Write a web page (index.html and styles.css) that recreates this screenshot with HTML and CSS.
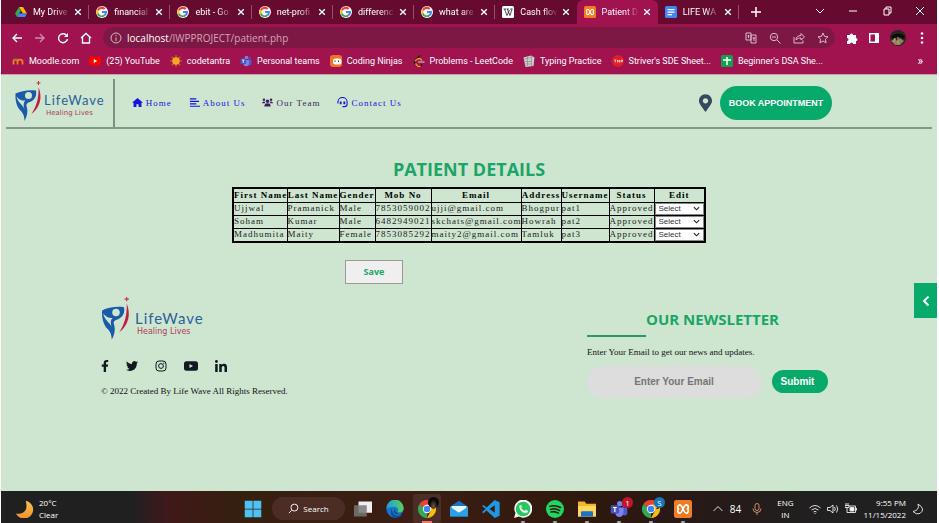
FILE: index.html
```html
<!DOCTYPE html>
<html lang="en">
<head>
<meta charset="utf-8">
<title>Patient Details</title>
<link rel="stylesheet" href="styles.css">
</head>
<body>
<svg class="defs" aria-hidden="true">
  <symbol id="google" viewBox="0 0 48 48">
    <circle cx="24" cy="24" r="24" fill="#fff"/>
    <path fill="#fbbc05" d="M10.3 18.7l-6-4.6a20 20 0 0 0 0 19.8l6-5a14 14 0 0 1 0-10.200z"/>
    <path fill="#ea4335" d="M24 12c3.100 0 5.800 1.200 8 3l5.600-5.600A20 20 0 0 0 4.300 14.100l6.500 4.700A14 14 0 0 1 24 12z"/>
    <path fill="#34a853" d="M24 44c5.200 0 9.900-2 13.400-5.200l-6.200-5.200A12 12 0 0 1 10.700 28.100l-6.400 5.800A20 20 0 0 0 24 44z"/>
    <path fill="#4285f4" d="M43.600 20H24v8h11.300a12 12 0 0 1-4.100 5.600l6.200 5.200C37 39.200 44 34 44 24c0-1.300-.1-2.700-.4-4z"/>
  </symbol>
  <symbol id="xampp" viewBox="0 0 24 24">
    <rect width="24" height="24" rx="3" fill="#f37c22"/>
    <path d="M8 6.500a3 3 0 0 0-3 3c0 1.400 1 2.500 2 2.500-1 0-2 1.100-2 2.500a3 3 0 0 0 3 3c3 0 5-11 8-11a3 3 0 0 1 3 3c0 1.400-1 2.500-2 2.500 1 0 2 1.100 2 2.500a3 3 0 0 1-3 3c-3 0-5-11-8-11z" fill="none" stroke="#fff" stroke-width="2.200"/>
  </symbol>
  <symbol id="teams" viewBox="0 0 24 24">
    <circle cx="19" cy="7" r="2.500" fill="#5059c9"/><circle cx="13" cy="5" r="3.600" fill="#7b83eb"/>
    <path d="M16 10h7v6a3.500 3.500 0 0 1-7 2z" fill="#5059c9"/>
    <path d="M8 10h10v7a5.500 5.500 0 0 1-11 0z" fill="#7b83eb"/>
    <rect x="1" y="7" width="11" height="11" rx="1.500" fill="#4b53bc"/>
    <path d="M4 10h5M6.500 10v6" stroke="#fff" stroke-width="1.600"/>
  </symbol>
  <symbol id="chrome" viewBox="0 0 24 24">
    <path d="M12 12L1.600 6A12 12 0 0 1 22.400 6z" fill="#ea4335"/>
    <path d="M12 12L1.600 6A12 12 0 0 0 12 24z" fill="#34a853"/>
    <path d="M12 12h10V6h.4A12 12 0 0 1 12 24l5-9z" fill="#fbbc05"/>
    <path d="M12 6h10.400L17 15z" fill="#fbbc05"/>
    <circle cx="12" cy="12" r="5.600" fill="#fff"/><circle cx="12" cy="12" r="4.400" fill="#4285f4"/>
  </symbol>
  <symbol id="emblem" viewBox="0 0 54 84">
    <path fill="#1a5aa8" d="M1 25C12 20 26 17 42 19c2 12-3 20-15 24-5 2-5 6-3 10 2 9 0 18-5 27 0-9-2-14-7-20C5 54 0 42 1 25z"/>
    <circle cx="27" cy="29" r="7" fill="#cee6d0"/>
    <path fill="#cee6d0" d="M3 31c6 7 12 9 18 8-5 4-4 10-2 17C14 46 6 44 3 31z"/>
    <path fill="#c01f45" d="M47 12c8 20 4 40-14 54 10-16 15-32 14-54z"/>
    <path fill="none" stroke="#d3283f" stroke-width="2" d="M47 0v8M43 4h8"/>
  </symbol>
  <symbol id="x" viewBox="0 0 10 10"><path d="M1.500 1.500l7 7M8.500 1.500l-7 7" stroke="currentColor" stroke-width="1.700"/></symbol>
</svg>

<header class="browser">
  <div class="tabstrip">
    <div class="tabs">
      <div class="tab"><svg class="ico" viewBox="0 0 24 24"><path d="M8 2h8l8 13h-8z" fill="#fbbc05"/><path d="M8 2L0 15l4 7 8-13z" fill="#34a853"/><path d="M8 15h16l-4 7H4z" fill="#4285f4"/></svg><span>My Drive</span><svg class="close"><use href="#x"/></svg></div>
      <div class="tab"><svg class="ico"><use href="#google"/></svg><span>financial</span><svg class="close"><use href="#x"/></svg></div>
      <div class="tab"><svg class="ico"><use href="#google"/></svg><span>ebit - Go</span><svg class="close"><use href="#x"/></svg></div>
      <div class="tab"><svg class="ico"><use href="#google"/></svg><span>net-profi</span><svg class="close"><use href="#x"/></svg></div>
      <div class="tab"><svg class="ico"><use href="#google"/></svg><span>differenc</span><svg class="close"><use href="#x"/></svg></div>
      <div class="tab"><svg class="ico"><use href="#google"/></svg><span>what are</span><svg class="close"><use href="#x"/></svg></div>
      <div class="tab before"><svg class="ico" viewBox="0 0 24 24"><rect width="24" height="24" rx="3" fill="#fff"/><path d="M3 6h5M9 6h5M16 6h5M5 6l5 13 5-11M10.500 6l5.500 13L20 6" fill="none" stroke="#222" stroke-width="1.600"/></svg><span>Cash flov</span><svg class="close"><use href="#x"/></svg></div>
      <div class="tab active"><svg class="ico"><use href="#xampp"/></svg><span>Patient D</span><svg class="close"><use href="#x"/></svg></div>
      <div class="tab"><svg class="ico" viewBox="0 0 24 24"><rect width="24" height="24" rx="3" fill="#4285f4"/><path d="M5 7h14M5 12h14M5 17h9" stroke="#fff" stroke-width="2.500"/></svg><span>LIFE WA</span><svg class="close"><use href="#x"/></svg></div>
    </div>
    <div class="window">
      <button aria-label="New tab"><svg viewBox="0 0 10 10"><path d="M5 0v10M0 5h10" stroke-width="1.500"/></svg></button>
      <button aria-label="Search tabs"><svg viewBox="0 0 10 10"><path d="M1 3l4 4 4-4"/></svg></button>
      <button aria-label="Minimize"><svg viewBox="0 0 10 10"><path d="M1 5h8"/></svg></button>
      <button aria-label="Restore"><svg viewBox="0 0 10 10"><path d="M2 3h5v6H2zM4 3V1h5v6H7"/></svg></button>
      <button aria-label="Close"><svg viewBox="0 0 10 10"><path d="M1 1l8 8M9 1L1 9"/></svg></button>
    </div>
  </div>
  <div class="toolbar">
    <div class="navs">
      <button aria-label="Back"><svg viewBox="0 0 12 12"><path d="M11 6H2M6 2L2 6l4 4"/></svg></button>
      <button class="dim" aria-label="Forward"><svg viewBox="0 0 12 12"><path d="M1 6h9M6 2l4 4-4 4"/></svg></button>
      <button aria-label="Reload"><svg viewBox="0 0 12 12"><path d="M10 4A4.500 4.500 0 1 0 10.500 7"/><path d="M11 1v4H7z" fill="#fff" stroke="none"/></svg></button>
      <button aria-label="Home"><svg viewBox="0 0 12 12"><path d="M1 6l5-4.500L11 6M2.500 5v6h7V5"/></svg></button>
    </div>
    <div class="address">
      <svg viewBox="0 0 12 12"><circle cx="6" cy="6" r="5"/><path d="M6 5.500V9M6 3v1.200"/></svg>
      <span class="url"><b>localhost</b>/IWPPROJECT/patient.php</span>
      <svg viewBox="0 0 12 12"><path d="M1 1h5v7H1zM6 3h5v8H6zM2.500 4h2M3.500 3v3M7.500 6h2.500M9 5v4"/></svg>
      <svg viewBox="0 0 12 12"><circle cx="5" cy="5" r="3.700"/><path d="M3 5h4M8 8l3.500 3.500"/></svg>
      <svg viewBox="0 0 12 12"><path d="M1 5v6h9V8.500M3 8c0-3 2-4.500 5-4.500V1.500L11.500 5 8 8V6C6 6 4.500 6.300 3 8z"/></svg>
      <svg viewBox="0 0 12 12"><path d="M6 1l1.500 3.400 3.500.4-2.600 2.400.7 3.600L6 9l-3.100 1.800.7-3.600L1 4.800l3.500-.4z"/></svg>
    </div>
    <div class="tools">
      <svg viewBox="0 0 12 12"><path d="M1 3h3a1.500 1.500 0 1 1 3 0h3v3a1.500 1.500 0 1 1 0 3v3H7a1.500 1.500 0 0 0-3 0H1V9a1.500 1.500 0 0 0 0-3z" fill="#fff"/></svg>
      <svg viewBox="0 0 12 12"><path d="M1 1h10v10H1z" fill="#fff"/><path d="M2.500 2.500H7v7H2.500z" fill="#a1134f"/></svg>
      <svg class="avatar" viewBox="0 0 16 16"><circle cx="8" cy="8" r="8" fill="#2a2620"/><path d="M1 6q7-5 14 0l-2 3q-5-4-10 0z" fill="#0c0c0c"/><path d="M1 11l4-3 2 3 3-3 4 3-4 4H5z" fill="#8e8060"/><path d="M8 7v7M5 8l-1 4" stroke="#d4a878"/></svg>
      <svg viewBox="0 0 12 12"><circle cx="6" cy="1.500" r="1.300" fill="#fff"/><circle cx="6" cy="6" r="1.300" fill="#fff"/><circle cx="6" cy="10.500" r="1.300" fill="#fff"/></svg>
    </div>
  </div>
  <nav class="bookmarks">
    <a href="#"><svg viewBox="0 0 24 24"><path d="M3 19v-6q0-4 4-4t4 4v6M11 19v-6q0-4 5-4t5 4v6" fill="none" stroke="#f98012" stroke-width="3.500"/><path d="M0 8l8-3 6 2-5 2z" fill="#555"/></svg>Moodle.com</a>
    <a href="#"><svg viewBox="0 0 24 24"><rect y="3" width="24" height="18" rx="5" fill="#f00"/><path d="M9.500 8l7 4-7 4z" fill="#fff"/></svg>(25) YouTube</a>
    <a href="#"><svg viewBox="0 0 24 24"><path d="M12 0v24M0 12h24M3.500 3.500l17 17M20.500 3.500l-17 17" stroke="#c8591c" stroke-width="3"/><circle cx="12" cy="12" r="7.500" fill="#f4a52a"/></svg>codetantra</a>
    <a href="#"><svg><use href="#teams"/></svg>Personal teams</a>
    <a href="#"><svg viewBox="0 0 24 24"><rect width="24" height="24" rx="6" fill="#f27427"/><rect x="6" y="7" width="17" height="12" rx="5" fill="#fff"/><path d="M10 11v3M17 11v3" stroke="#a1134f" stroke-width="2"/></svg>Coding Ninjas</a>
    <a href="#"><svg viewBox="0 0 24 24" fill="none" stroke-width="2.600"><path d="M14 1L4 12q-2 3 0 5l5 5q3 2 6 0l3-3" stroke="#1b1b1b"/><path d="M4 12l5-4q3-2 6 0l3 3M5 17l4 5q3 2 6 0" stroke="#f89f1b"/><path d="M10 14h13" stroke="#b3b3b3"/></svg>Problems - LeetCode</a>
    <a href="#"><svg viewBox="0 0 24 24"><path d="M1 5l15-4 7 4-2 17-16 2z" fill="#ccc"/><path d="M3 8l13-3M4 13h13M5 18h12M17 2v20M9 4v18" stroke="#777"/></svg>Typing Practice</a>
    <a href="#"><svg viewBox="0 0 24 24"><circle cx="12" cy="12" r="12" fill="#e11d25"/><path d="M4 10h5M6.500 10v5M11 15v-5l2 3 2-3v5M18 15v-5h3v3h-3" fill="none" stroke="#fff" stroke-width="1.300"/></svg>Striver's SDE Sheet...</a>
    <a href="#"><svg viewBox="0 0 24 24"><rect width="24" height="24" rx="3" fill="#12a150"/><path d="M12 4v16M4 10h16" stroke="#fff" stroke-width="3"/></svg>Beginner's DSA She...</a>
    <span class="more">»</span>
  </nav>
</header>

<div class="page">
  <header class="site">
    <a class="brand" href="#"><svg><use href="#emblem"/></svg><span><b>LifeWave</b><small>Healing Lives</small></span></a>
    <nav class="menu">
      <a href="#"><svg viewBox="0 0 12 12" fill="currentColor"><path d="M6 1l6 5.300H10.300V11H7.200V8H4.800v3H1.700V6.300H0z"/></svg>Home</a>
      <a href="#"><svg viewBox="0 0 12 12" stroke="currentColor" stroke-width="1.300"><path d="M1 2h7M1 4.700h10M1 7.400h7M1 10.100h11"/></svg>About Us</a>
      <a class="visited" href="#"><svg viewBox="0 0 14 12" fill="currentColor"><circle cx="2.500" cy="2.500" r="1.600"/><circle cx="11.500" cy="2.500" r="1.600"/><circle cx="7" cy="4.500" r="2.200"/><path d="M0 7q0-2.500 3-2.300L4.500 7zM14 7q0-2.500-3-2.300L9.500 7zM3 11q0-4 4-4t4 4z"/></svg>Our Team</a>
      <a href="#"><svg viewBox="0 0 12 12" fill="none" stroke="currentColor" stroke-width="1.200"><path d="M1 7V5.500a5 5 0 0 1 10 0V8q0 2.500-3 2.500H6"/><path d="M4 5v3M8 5v3" stroke-width="2"/></svg>Contact Us</a>
    </nav>
    <svg class="pin" viewBox="0 0 384 512"><path fill="#34495e" d="M172.268 501.670C26.970 291.031 0 269.413 0 192 0 85.961 85.961 0 192 0s192 85.961 192 192c0 77.413-26.970 99.031-172.268 309.670-9.535 13.774-29.930 13.773-39.464 0zM192 272c44.183 0 80-35.817 80-80s-35.817-80-80-80-80 35.817-80 80 35.817 80 80 80z"/></svg>
    <button class="book">BOOK APPOINTMENT</button>
  </header>

  <main>
    <h1>PATIENT DETAILS</h1>
    <form class="records">
      <table>
        <colgroup><col class="w54"><col class="w52"><col class="w36"><col class="w56"><col class="w90"><col class="w40"><col class="w48"><col class="w45"><col class="w51"></colgroup>
        <thead><tr><th>First Name</th><th>Last Name</th><th>Gender</th><th>Mob No</th><th>Email</th><th>Address</th><th>Username</th><th>Status</th><th>Edit</th></tr></thead>
        <tbody>
          <tr><td>Ujjwal</td><td>Pramanick</td><td>Male</td><td>7853059002</td><td>ujji@gmail.com</td><td>Bhogpur</td><td>pat1</td><td>Approved</td><td><select aria-label="Edit pat1"><option>Select</option></select></td></tr>
          <tr><td>Soham</td><td>Kumar</td><td>Male</td><td>6482949021</td><td>skchats@gmail.com</td><td>Howrah</td><td>pat2</td><td>Approved</td><td><select aria-label="Edit pat2"><option>Select</option></select></td></tr>
          <tr><td>Madhumita</td><td>Maity</td><td>Female</td><td>7853085292</td><td>maity2@gmail.com</td><td>Tamluk</td><td>pat3</td><td>Approved</td><td><select aria-label="Edit pat3"><option>Select</option></select></td></tr>
        </tbody>
      </table>
      <button class="save" type="button">Save</button>
    </form>
  </main>

  <footer class="foot">
    <div class="about">
      <a class="brand" href="#"><svg><use href="#emblem"/></svg><span><b>LifeWave</b><small>Healing Lives</small></span></a>
      <div class="social">
        <a href="#" aria-label="Facebook"><svg class="slim" viewBox="0 0 320 512"><path d="M279.140 288l14.220-92.660h-88.910v-60.130c0-25.350 12.420-50.060 52.240-50.060h40.420V6.260S260.430 0 225.360 0c-73.220 0-121.080 44.380-121.080 124.720v70.620H22.890V288h81.390v224h100.170V288z"/></svg></a>
        <a href="#" aria-label="Twitter"><svg viewBox="0 0 24 24"><path d="M23.953 4.570a10 10 0 01-2.825.775 4.958 4.958 0 002.163-2.723c-.951.555-2.005.959-3.127 1.184a4.920 4.920 0 00-8.384 4.482C7.690 8.095 4.067 6.130 1.640 3.162a4.822 4.822 0 00-.666 2.475c0 1.710.870 3.213 2.188 4.096a4.904 4.904 0 01-2.228-.616v.060a4.923 4.923 0 003.946 4.827 4.996 4.996 0 01-2.212.085 4.936 4.936 0 004.604 3.417 9.867 9.867 0 01-6.102 2.105c-.390 0-.779-.023-1.170-.067a13.995 13.995 0 007.557 2.209c9.053 0 13.998-7.496 13.998-13.985 0-.210 0-.420-.015-.630A9.935 9.935 0 0024 4.590z"/></svg></a>
        <a href="#" aria-label="Instagram"><svg class="line" viewBox="0 0 24 24"><rect x="2" y="2" width="20" height="20" rx="6"/><circle cx="12" cy="12" r="4.800"/><circle cx="17.800" cy="6.200" r=".5"/></svg></a>
        <a href="#" aria-label="YouTube"><svg class="wide" viewBox="0 0 28 24"><path fill-rule="evenodd" d="M5 2.500h18q5 0 5 5v9q0 5-5 5H5q-5 0-5-5v-9q0-5 5-5zM11 8v8l7-4z"/></svg></a>
        <a href="#" aria-label="LinkedIn"><svg viewBox="0 0 448 448"><path d="M100.280 448H7.400V148.900h92.880zM53.790 108.100C24.090 108.100 0 83.500 0 53.800a53.790 53.790 0 0 1 107.580 0c0 29.700-24.100 54.300-53.790 54.300zM447.900 448h-92.680V302.400c0-34.700-.7-79.200-48.290-79.200-48.290 0-55.690 37.700-55.690 76.700V448h-92.780V148.900h89.080v40.800h1.300c12.400-23.500 42.690-48.300 87.880-48.300 94 0 111.280 61.900 111.280 142.300V448z"/></svg></a>
      </div>
      <p>© 2022 Created By Life Wave All Rights Reserved.</p>
    </div>
    <form class="news">
      <h2>OUR NEWSLETTER</h2>
      <label for="mail">Enter Your Email to get our news and updates.</label>
      <div class="row"><input id="mail" type="email" placeholder="Enter Your Email"><button type="button">Submit</button></div>
    </form>
  </footer>
  <button class="drawer" aria-label="Open panel"><svg viewBox="0 0 10 12"><path d="M7.500 1.500L3 6l4.500 4.500" fill="none" stroke="#fff" stroke-width="2"/></svg></button>
</div>

<footer class="taskbar">
  <div class="weather"><svg viewBox="0 0 24 24"><defs><linearGradient id="moon" x2="0" y2="1"><stop stop-color="#ffc34d"/><stop offset="1" stop-color="#f0902a"/></linearGradient></defs><path d="M13 1a12 12 0 1 1-13 17q9 2 13-5 2-5 0-12z" fill="url(#moon)"/></svg><span>20°C<br>Clear</span></div>
  <div class="apps">
    <a href="#" aria-label="Start"><svg viewBox="0 0 24 24"><path fill="#4cc2f5" d="M1 1h10.500v10.500H1zM12.500 1H23v10.500H12.500zM1 12.500h10.500V23H1zM12.500 12.500H23V23H12.500z"/></svg></a>
    <button class="find"><svg viewBox="0 0 12 12"><circle cx="7" cy="5" r="3.800"/><path d="M4 8l-3 3"/></svg>Search</button>
    <a href="#" aria-label="Task view"><svg viewBox="0 0 24 24"><rect x="6" y="2" width="18" height="15" fill="#eee"/><rect y="7" width="17" height="15" fill="#777" opacity=".85"/></svg></a>
    <a href="#" aria-label="Edge"><svg viewBox="0 0 24 24"><defs><linearGradient id="edge"><stop stop-color="#1b9de2"/><stop offset="1" stop-color="#5bd15b"/></linearGradient></defs><circle cx="12" cy="12" r="11.500" fill="#1279c9"/><path d="M.5 11A11.500 11.500 0 0 1 23.500 11c0 5-5 6-8 5 2-5-1-7-4-7-5 0-8 1-11 2z" fill="url(#edge)"/><path d="M8 11c-1 5 3 10 8 10l5-1q-3 3.500-9 3.500C6 22 5 15 8 11z" fill="#0c4f9e"/><path d="M11 12q-2 7 8 7l4-3-2 3q-9 0-10-7z" fill="#3b2318"/></svg></a>
    <a class="current" href="#" aria-label="Chrome"><svg><use href="#chrome"/></svg><i class="face"></i></a>
    <a href="#" aria-label="Mail"><svg viewBox="0 0 24 24"><path d="M0 9l12-8 12 8v13H0z" fill="#1673c6"/><path d="M2 8h20v9H2z" fill="#eaf6fd"/><path d="M0 9l12 8 12-8v13H0z" fill="#2ba2e8"/></svg></a>
    <a href="#" aria-label="Visual Studio Code"><svg viewBox="0 0 24 24"><path d="M17 0l6.500 3v18L17 24 6 14l-4 3.500L0 16l5-4-5-4 2-1.500L6 10zm0 7l-7 5 7 5z" fill="#2196e3"/></svg></a>
    <a class="open" href="#" aria-label="WhatsApp"><svg viewBox="0 0 24 24"><path d="M0 24l2-6.500A12 12 0 1 1 6.500 22z" fill="#fff"/><circle cx="12" cy="12" r="9.700" fill="#25c95c"/><path d="M7 8q2-3 3.500.5l-1 2q2 3 4.500 4l2-1.500 2.500 1.500q0 3-4 3Q7 15 7 8z" fill="#fff"/></svg></a>
    <a class="open" href="#" aria-label="Spotify"><svg viewBox="0 0 24 24"><circle cx="12" cy="12" r="12" fill="#1ed760"/><path d="M5 8.500q7-2 14.500 1.500M6 12.500q6-2 12 1.500M6.500 16q5-1.500 10 1.500" fill="none" stroke="#2b1a12" stroke-width="2" stroke-linecap="round"/></svg></a>
    <a class="open" href="#" aria-label="Files"><svg viewBox="0 0 24 24"><path d="M0 2h9l2 3h13v17H0z" fill="#f2b629"/><path d="M0 8h24v14H0z" fill="#ffd75e"/><path d="M5 15h14q1 0 1 1v6H4v-6z" fill="#1b74c4"/></svg></a>
    <a class="open" href="#" aria-label="Teams"><svg><use href="#teams"/></svg><i class="count red">1</i></a>
    <a class="open" href="#" aria-label="Chrome profile"><svg><use href="#chrome"/></svg><i class="count blue">S</i></a>
    <a class="open" href="#" aria-label="XAMPP"><svg><use href="#xampp"/></svg></a>
  </div>
  <div class="tray">
    <svg viewBox="0 0 12 12"><path d="M1.500 8L6 3.500 10.500 8"/></svg>
    <span class="temp">84</span>
    <svg class="mic" viewBox="0 0 12 12"><rect x="4" y=".5" width="4" height="7" rx="2"/><path d="M2 5.500q0 4 4 4t4-4M6 9.500V12"/></svg>
    <span class="lang">ENG<br>IN</span>
    <svg viewBox="0 0 12 12"><path d="M.5 5q5.500-5 11 0M2.500 7q3.500-3 7 0M4.500 9q1.500-1.300 3 0M6 10v1"/></svg>
    <svg class="snd" viewBox="0 0 12 12"><path d="M.5 4.500H3L6 2v8L3 7.500H.5zM7.500 4q1.500 2 0 4M9.500 2.500q2.500 3.500 0 7"/></svg>
    <svg viewBox="0 0 12 12"><path d="M4 3h6.500v6.500H2V7M11.500 5v2.500M1 0v2M3 0v2M0 2.500h4v2H0zM2 4v3"/><path d="M5 4.500h4V8H5z" fill="#fff"/></svg>
    <span class="clock">9:55 PM<br>11/15/2022</span>
    <svg viewBox="0 0 12 12"><path d="M6 1q2 6-5 7.500Q4 12 8 10.500 14 6 6 1z"/></svg>
  </div>
</footer>
</body>
</html>
```

FILE: styles.css
```css
* { box-sizing: border-box; }
body {
  margin: 0;
  min-height: 100vh;
  display: flex;
  flex-direction: column;
  background: #fff;
  border-left: 1px solid #fff;
  border-right: 2px solid #fff;
  font-family: "Open Sans", "Noto Sans", sans-serif;
}
button { border: 0; padding: 0; background: none; color: inherit; font: inherit; }
a { color: inherit; text-decoration: none; }
svg { display: block; flex: none; }
.defs { position: absolute; width: 0; height: 0; }

/* Browser chrome */
.browser { background: #a1134f; color: #fff; border-bottom: 1px solid #cf9bab; }
.tabstrip { display: flex; height: 24px; background: #660a30; }
.tabs { display: flex; flex: 1; min-width: 0; padding-left: 7px; }
.tab {
  flex: 1 1 0;
  min-width: 0;
  display: flex;
  align-items: center;
  padding: 0 7px;
  position: relative;
  font: 9px Roboto, sans-serif;
}
.tab::after { content: ""; position: absolute; right: 0; top: 5px; height: 14px; border-right: 1px solid #97506c; }
.tab.before::after, .tab.active::after { display: none; }
.tab.active { background: #a1134f; border-radius: 6px 6px 0 0; }
.tab span {
  flex: 1;
  min-width: 0;
  margin: 0 4px 0 6px;
  overflow: hidden;
  white-space: nowrap;
  -webkit-mask-image: linear-gradient(90deg, #000 60%, transparent);
  mask-image: linear-gradient(90deg, #000 60%, transparent);
}
.ico { width: 12px; height: 12px; }
.close { width: 8px; height: 8px; }
.window { display: flex; flex: none; width: 198px; align-items: center; justify-content: space-between; padding: 0 12px 3px; }
.window svg { width: 10px; height: 10px; fill: none; stroke: #fff; }
.window button:first-child { margin: 3px 30px 0 0; }
.toolbar { display: flex; align-items: center; height: 27px; padding: 0 9px 0 10px; }
.navs { display: flex; gap: 11px; margin-right: 11px; }
.navs svg { width: 12px; height: 12px; fill: none; stroke: #fff; stroke-width: 1.4; }
.dim { opacity: .5; }
.address {
  flex: 1;
  display: flex;
  align-items: center;
  gap: 12px;
  height: 21px;
  padding: 0 6px 0 7px;
  border-radius: 11px;
  background: #7c1843;
  font-size: 10px;
  color: #d3a6b7;
}
.address svg { width: 12px; height: 12px; fill: none; stroke: #dcb9c7; }
.url { flex: 1; margin-left: -7px; }
.url b { color: #fff; font-weight: 400; }
.tools { display: flex; align-items: center; gap: 10px; margin-left: 11px; }
.tools svg { width: 12px; height: 12px; }
.tools .avatar { width: 16px; height: 16px; }
.bookmarks { display: flex; align-items: center; height: 23px; padding: 0 14px 3px 11px; gap: 10px; font: 9px Roboto, sans-serif; white-space: nowrap; }
.bookmarks a { display: flex; align-items: center; gap: 5px; }
.bookmarks svg { width: 12px; height: 12px; }
.more { margin-left: auto; font-size: 12px; }

/* Site */
.page { flex: 1; position: relative; background: #cee6d0; color: #111; font-family: "Liberation Serif", serif; }
.site { display: flex; align-items: center; margin: 0 5px; height: 54px; padding: 3px 100px 0 9px; border-bottom: 2px solid #85968a; }
.brand { display: flex; align-items: flex-start; gap: 2px; }
.brand svg { width: 27px; height: 42px; }
.brand span { display: flex; flex-direction: column; padding-top: 11px; font-family: Lato, sans-serif; }
.brand b { font-weight: 400; font-size: 13px; line-height: 16px; letter-spacing: 1px; color: #2b6199; }
.brand small { font-size: 7px; line-height: 10px; padding-left: 2px; color: #b23a57; font-family: "DejaVu Sans", sans-serif; }
.site .brand { height: 48px; align-self: flex-end; padding: 2px 8px 0 0; border-right: 2px solid #7d8f83; }
.menu { display: flex; gap: 17px; margin-left: 17px; font-size: 9px; letter-spacing: 1px; color: #1414e0; }
.menu a { display: flex; align-items: center; gap: 3px; }
.menu svg { width: 11px; height: 11px; }
.menu .visited { color: #3f1d63; }
.pin { width: 13px; height: 18px; margin: 0 8px 0 auto; }
.book { width: 112px; height: 34px; border-radius: 17px; background: #07aa6a; color: #fff; font: bold 9px "Liberation Sans", sans-serif; }
h1, h2 { margin: 0; font-family: "Open Sans", sans-serif; font-weight: 700; color: #1ba566; }
main { padding-top: 27px; }
h1 { font-size: 18px; line-height: 26px; text-align: center; }
.records { width: 474px; margin: 5px auto 0; }
table { border-collapse: collapse; table-layout: fixed; width: 100%; border: 2px solid #000; font-size: 9px; line-height: 11px; letter-spacing: 1px; }
th, td { height: 13px; padding: 0; border: 1px solid #000; text-align: left; white-space: nowrap; color: #222; }
th { height: 14px; text-align: center; color: #000; }
.w54 { width: 54px; }
.w52 { width: 52px; }
.w36 { width: 36px; }
.w56 { width: 56px; }
.w90 { width: 90px; }
.w40 { width: 40px; }
.w48 { width: 48px; }
.w45 { width: 45px; }
.w51 { width: 51px; }
select {
  display: block;
  appearance: none;
  width: 100%;
  height: 12px;
  padding: 0 3px;
  border: 1px solid #888;
  border-radius: 0;
  background: #fff url("data:image/svg+xml,%3Csvg xmlns='http://www.w3.org/2000/svg' viewBox='0 0 8 8'%3E%3Cpath d='M1 2.500l3 3 3-3' fill='none' stroke='%23222' stroke-width='1.300'/%3E%3C/svg%3E") no-repeat right 3px center / 7px 7px;
  color: #333;
  font: 8px "Liberation Sans", sans-serif;
}
.save { display: block; width: 58px; height: 24px; margin: 17px 0 0 113px; border: 1px solid #999; background: #efefef; color: #1ba566; font: bold 9px "Open Sans", sans-serif; }
.foot { display: flex; justify-content: space-between; padding: 13px 109px 0 100px; font-size: 9px; }
.foot .brand svg { width: 30px; height: 45px; }
.foot .brand { gap: 4px; }
.foot .brand span { padding-top: 13px; }
.foot .brand b { font-size: 15px; }
.foot .brand small { font-size: 8px; line-height: 12px; }
.social { display: flex; align-items: center; gap: 17px; height: 12px; margin: 18px 0 13px; }
.social svg { width: 12px; height: 12px; fill: #101820; }
.social .wide { width: 14px; }
.social .slim { width: 8px; }
.social .line { fill: none; stroke: #101820; stroke-width: 2; }
.foot p { margin: 0; line-height: 12px; }
.news { width: 241px; padding-top: 10px; }
h2 { font-size: 15px; line-height: 24px; padding-left: 59px; }
h2::after { content: ""; display: block; width: 59px; height: 2px; margin: 4px 0 0 -59px; background: #259a68; }
.news label { display: block; margin-top: 9px; line-height: 12px; }
.row { display: flex; align-items: center; justify-content: space-between; margin-top: 8px; }
.row input { width: 174px; height: 32px; border: 0; border-radius: 16px; background: #ddd; text-align: center; font: bold 10px "Liberation Sans", sans-serif; }
.row input::placeholder { color: #757575; }
.row button { width: 56px; height: 23px; padding-right: 5px; border-radius: 12px; background: #07aa6a; color: #fff; font: bold 10px "Liberation Sans", sans-serif; }
.drawer { position: absolute; right: 0; top: 208px; width: 23px; height: 35px; display: grid; place-items: center; background: #07aa6a; }
.drawer svg { width: 10px; height: 12px; }

/* Taskbar */
.taskbar {
  display: flex;
  align-items: center;
  height: 32px;
  color: #fff;
  font-size: 8px;
  line-height: 12px;
  background: linear-gradient(90deg, #202021 14%, #41181a 18%, #35200f 25%, #3c1d14 45%, #2e180c 63%, #261a18 76%, #202021 88%);
}
.taskbar svg { width: 18px; height: 18px; }
.weather { display: flex; align-items: center; gap: 5px; width: 236px; padding: 4px 0 0 15px; }
.apps { display: flex; align-items: center; height: 100%; padding-top: 3px; }
.apps a { position: relative; display: grid; place-items: center; width: 32px; height: 29px; }
.find { display: flex; align-items: center; justify-content: center; gap: 4px; width: 73px; height: 23px; margin: 0 2px 0 3px; border-radius: 12px; background: #4b2d25; font-size: 8px; }
.find svg { width: 11px; height: 11px; fill: none; stroke: #fff; }
.apps .current { background: #4b2e27; border-radius: 3px; width: 28px; margin: 0 2px; }
.current::after, .open::after { content: ""; position: absolute; bottom: 0; left: 50%; width: 4px; height: 2px; margin-left: -2px; background: #999; }
.apps .current::after { width: 10px; margin-left: -5px; background: #f27a62; }
.face, .count { position: absolute; right: 2px; top: 3px; width: 11px; height: 11px; border-radius: 50%; text-align: center; font-style: normal; line-height: 11px; }
.face { background: radial-gradient(at 50% 80%, #6b573c, #0a0a0a 50%); }
.red { background: #c4122f; }
.blue { background: #1576b8; }
.tray { display: flex; flex: 1; align-items: center; justify-content: flex-end; gap: 6px; padding: 3px 13px 0 0; }
.tray svg { width: 12px; height: 12px; fill: none; stroke: #ddd; }
.temp { font-size: 10px; }
.tray .mic { stroke: #d08a70; margin: 0 8px 0 4px; }
.lang { text-align: center; margin-right: 9px; }
.clock { text-align: right; margin-left: 1px; }
```
